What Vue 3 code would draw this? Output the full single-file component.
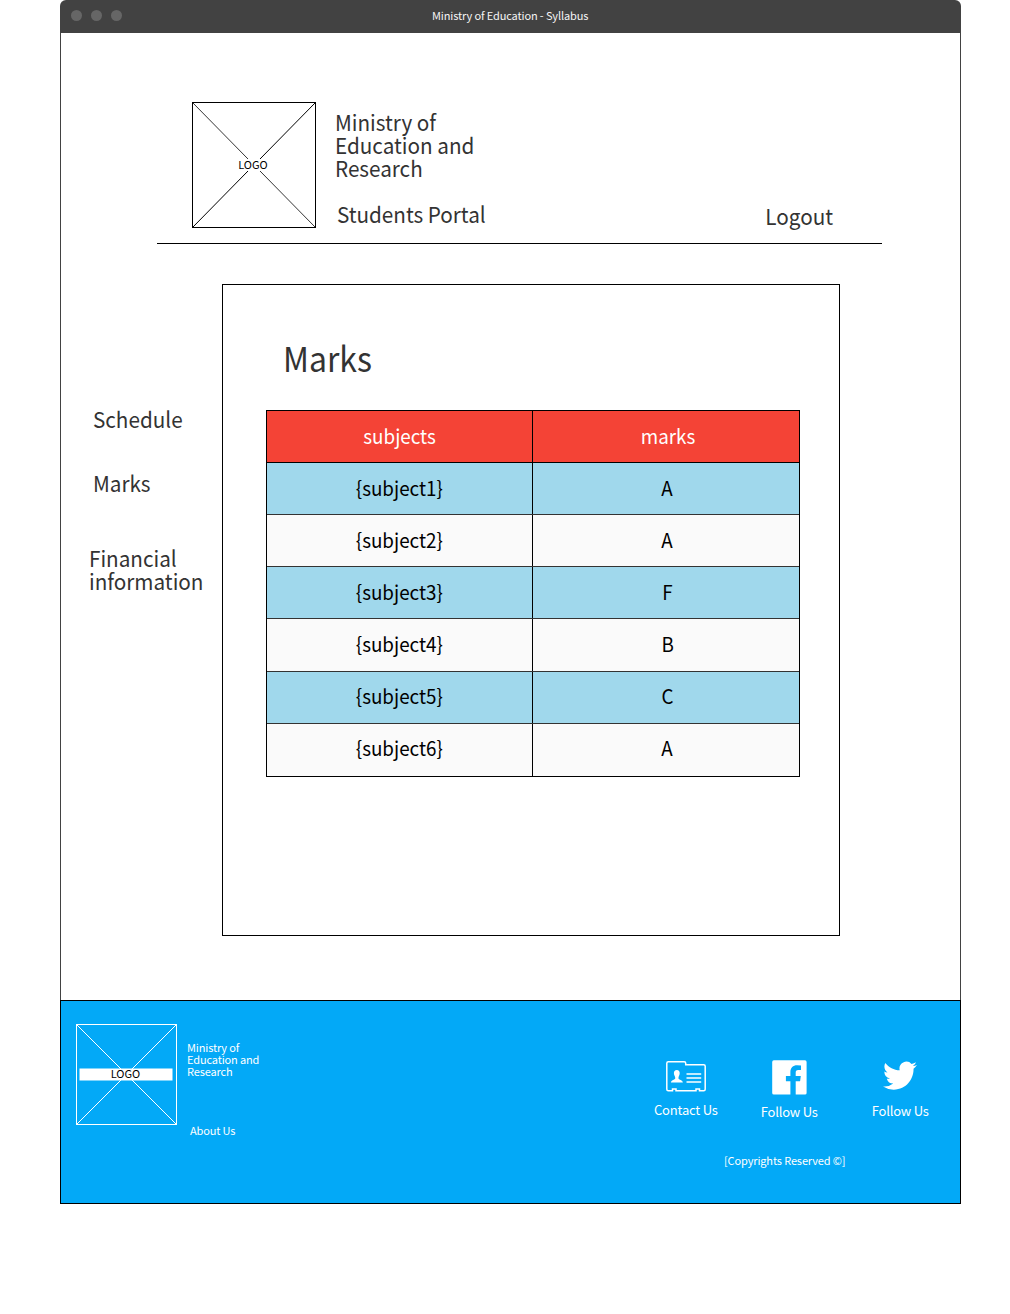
<script setup>
const rows = [
  ['{subject1}', 'A'],
  ['{subject2}', 'A'],
  ['{subject3}', 'F'],
  ['{subject4}', 'B'],
  ['{subject5}', 'C'],
  ['{subject6}', 'A'],
]
</script>

<template>
  <div class="window">
    <div class="titlebar">
      <div class="dots"><i></i><i></i><i></i></div>
      <div class="title">Ministry of Education - Syllabus</div>
    </div>

    <div class="page">
      <header class="header">
        <svg class="logo" width="124" height="126" viewBox="0 0 124 126">
          <rect x=".5" y=".5" width="123" height="125" fill="#fff" stroke="#000" />
          <path d="M.5.5 L56 57 M68 69 L123.5 125.5" stroke="#000" stroke-width=".8" />
          <path d="M123.5.5 L68 57 M56 69 L.5 125.5" stroke="#000" />
          <text x="61" y="67" text-anchor="middle">LOGO</text>
        </svg>
        <div class="brand">
          <div>Ministry of<br />Education and<br />Research</div>
          <div class="portal">Students Portal</div>
        </div>
        <a class="logout">Logout</a>
      </header>

      <div class="body">
        <nav class="side">
          <a class="schedule">Schedule</a>
          <a class="marks">Marks</a>
          <a class="financial">Financial<br />information</a>
        </nav>
        <main class="card">
          <h1>Marks</h1>
          <div class="table">
            <div class="row head">
              <div class="cell"><span>subjects</span></div>
              <div class="cell"><span>marks</span></div>
            </div>
            <div v-for="r in rows" :key="r[0]" class="row">
              <div v-for="c in r" :key="c" class="cell"><span>{{ c }}</span></div>
            </div>
          </div>
        </main>
      </div>
    </div>

    <footer class="footer">
      <svg class="logo" width="101" height="101" viewBox="0 0 101 101">
        <path d="M.5.5 L100.500 100.500 M100.500.5 L.5 100.500" stroke="#fff" />
        <rect x=".5" y=".5" width="100" height="100" fill="none" stroke="#fff" />
        <rect x="3.500" y="44.500" width="93" height="12" fill="#fff" />
        <text x="49.500" y="54" text-anchor="middle">LOGO</text>
      </svg>
      <div class="about">
        <div>Ministry of<br />Education and<br />Research</div>
        <a>About Us</a>
      </div>
      <div class="right">
        <div class="links">
          <a class="contact">
            <svg width="40" height="31" viewBox="0 0 40 31">
              <path d="M.8 28.200V2.300Q.8.8 2.300.8H18.200Q19.700.8 19.700 2.300V3.800H37.700Q39.200 3.800 39.200 5.300V28.200Q39.200 29.700 37.700 29.700H33.500V28H30V29.700H10V28H6.500V29.700H2.300Q.8 29.700.8 28.200Z" fill="none" stroke="#fff" stroke-width="1.500" />
              <path d="M10.800 9C12.800 9 13.800 10.400 13.700 12.200C13.600 14.500 12.500 15.400 12.500 16.600V17.500C12.700 18.900 16.800 18.700 16.900 21.600H4.900C5 18.700 9 18.900 9.200 17.500V16.600C9.200 15.400 8 14.500 7.900 12.200C7.800 10.400 8.800 9 10.800 9Z" fill="#fff" />
              <path d="M20.500 13H35.200M20.500 17H35.200M20.500 21H35.200" stroke="#fff" stroke-width="1.500" />
            </svg>
            <span>Contact Us</span>
          </a>
          <a class="facebook">
            <svg width="35" height="35" viewBox="0 0 35 35">
              <path d="M1.900.2H33Q34.600.2 34.600 1.900V32.900Q34.600 34.500 33 34.500H23.700V21.200H28.100L28.800 16H23.700V12.700C23.700 11.200 24.200 10.100 26.300 10.100H29V5.500Q27.400 5.200 25.100 5.200C21 5.200 18.400 7.700 18.400 12.100V16H13.900V21.200H18.400V34.500H1.900Q.2 34.500.2 32.900V1.900Q.2.2 1.900.2Z" fill="#fff" />
            </svg>
            <span>Follow Us</span>
          </a>
          <a class="twitter">
            <svg width="34" height="29" viewBox="0 1.800 24 20.200" preserveAspectRatio="none">
              <path d="M23.954 4.569a10 10 0 0 1-2.825.775 4.958 4.958 0 0 0 2.163-2.723c-.951.555-2.005.959-3.127 1.184a4.920 4.920 0 0 0-8.384 4.482C7.691 8.094 4.066 6.130 1.640 3.161a4.822 4.822 0 0 0-.666 2.475c0 1.710.870 3.213 2.188 4.096a4.904 4.904 0 0 1-2.228-.616v.061a4.923 4.923 0 0 0 3.946 4.827 4.996 4.996 0 0 1-2.212.085 4.937 4.937 0 0 0 4.604 3.417 9.868 9.868 0 0 1-6.102 2.105c-.390 0-.779-.023-1.170-.067a13.995 13.995 0 0 0 7.557 2.209c9.054 0 13.999-7.496 13.999-13.986 0-.209 0-.420-.015-.630a9.936 9.936 0 0 0 2.460-2.548z" fill="#fff" />
            </svg>
            <span>Follow Us</span>
          </a>
        </div>
        <div class="copy">[Copyrights Reserved ©]</div>
      </div>
    </footer>
  </div>
</template>

<style>
body {
  margin: 0;
  background: #fff;
}
</style>

<style scoped>
.window {
  box-sizing: border-box;
  width: 901px;
  margin-left: 60px;
  font-family: "Noto Sans CJK SC", sans-serif;
  color: #333;
  white-space: nowrap;
}
.titlebar {
  display: grid;
  grid-template-columns: 372px auto 1fr;
  height: 33px;
  background: #424242;
  border-radius: 6px 6px 0 0;
}
.dots {
  display: flex;
  gap: 9px;
  padding: 9.5px 0 0 11px;
}
.dots i {
  width: 11px;
  height: 11px;
  border-radius: 50%;
  background: #666;
}
.title {
  font-size: 11px;
  line-height: 30px;
  letter-spacing: -0.125px;
  color: #f5f5f5;
}
.page {
  box-sizing: border-box;
  height: 967px;
  border: solid #424242;
  border-width: 0 1px;
}
.header {
  box-sizing: border-box;
  display: flex;
  width: 725px;
  height: 211px;
  margin-left: 96px;
  padding: 69px 49px 0 35px;
  border-bottom: 1px solid #000;
  font-size: 22px;
  line-height: 23px;
}
.logo {
  flex: none;
  display: block;
}
.logo text {
  font-size: 11px;
  fill: #000;
}
/* Large text is set slightly condensed */
.brand,
.side a,
h1 {
  transform: scaleX(0.94);
  transform-origin: left;
}
.brand {
  margin: 8px 0 0 19px;
}
.portal {
  margin: 23px 0 0 2px;
}
.logout {
  align-self: flex-start;
  margin: 102px 0 0 auto;
  transform: scaleX(0.94);
  transform-origin: right;
}
.body {
  display: flex;
}
.side {
  display: flex;
  flex-direction: column;
  width: 161px;
  box-sizing: border-box;
  padding: 163px 0 0 32px;
  font-size: 22px;
  line-height: 23px;
}
.marks {
  margin-top: 41px;
}
.financial {
  margin: 52px 0 0 -4px;
}
.card {
  box-sizing: border-box;
  width: 618px;
  height: 652px;
  margin-top: 40px;
  padding: 53px 0 0 43px;
  border: 1px solid #000;
}
h1 {
  margin: 0 0 32px 17px;
  font-size: 34px;
  line-height: 40px;
  font-weight: 400;
}
.table {
  box-sizing: border-box;
  width: 534px;
  height: 367px;
  border: 1px solid #000;
  font-size: 20px;
  color: #000;
}
.row {
  box-sizing: border-box;
  display: grid;
  grid-template-columns: 266px 266px;
  height: 52px;
  border-bottom: 1px solid #333;
  line-height: 49px;
  text-align: center;
  background: #fafafa;
}
.cell:first-child {
  border-right: 1px solid #000;
}
.cell:last-child {
  padding-left: 3px;
}
.cell span {
  display: inline-block;
  transform: scaleX(0.94);
}
.row:nth-child(even) {
  background: #a0d8ec;
}
.row.head {
  background: #f44336;
  border-color: #000;
  color: #fff;
}
.row:nth-child(5) {
  height: 53px;
}
.row:nth-child(n + 6) {
  line-height: 47px;
}
.row:last-child {
  border: 0;
}
.footer {
  box-sizing: border-box;
  display: flex;
  height: 204px;
  padding: 23px 0 0 15px;
  background: #03a9f7;
  border: 1px solid #000;
  color: #fff;
}
.about {
  display: flex;
  flex-direction: column;
  margin: 17px 0 0 10px;
  width: 80px;
  font-size: 11px;
  line-height: 12px;
  letter-spacing: -0.14px;
}
.about a {
  margin: 47px 0 0 3px;
}
.right {
  margin: 35px 0 0 387px;
}
.links {
  display: flex;
  align-items: flex-start;
  height: 60px;
  font-size: 13px;
  line-height: 18px;
  letter-spacing: -0.2px;
}
.links a {
  display: flex;
  flex-direction: column;
  align-items: center;
}
.links svg {
  display: block;
}
.contact {
  padding-top: 2px;
}
.contact span {
  margin-top: 9px;
}
.facebook {
  margin-left: 43px;
  padding-top: 0.5px;
}
.facebook span {
  margin-top: 8.5px;
}
.twitter {
  margin-left: 54px;
  padding-top: 2px;
}
.twitter span {
  margin-top: 12px;
}
.copy {
  margin: 33px 0 0 70px;
  font-size: 11px;
  line-height: 16px;
  letter-spacing: -0.13px;
}
</style>
